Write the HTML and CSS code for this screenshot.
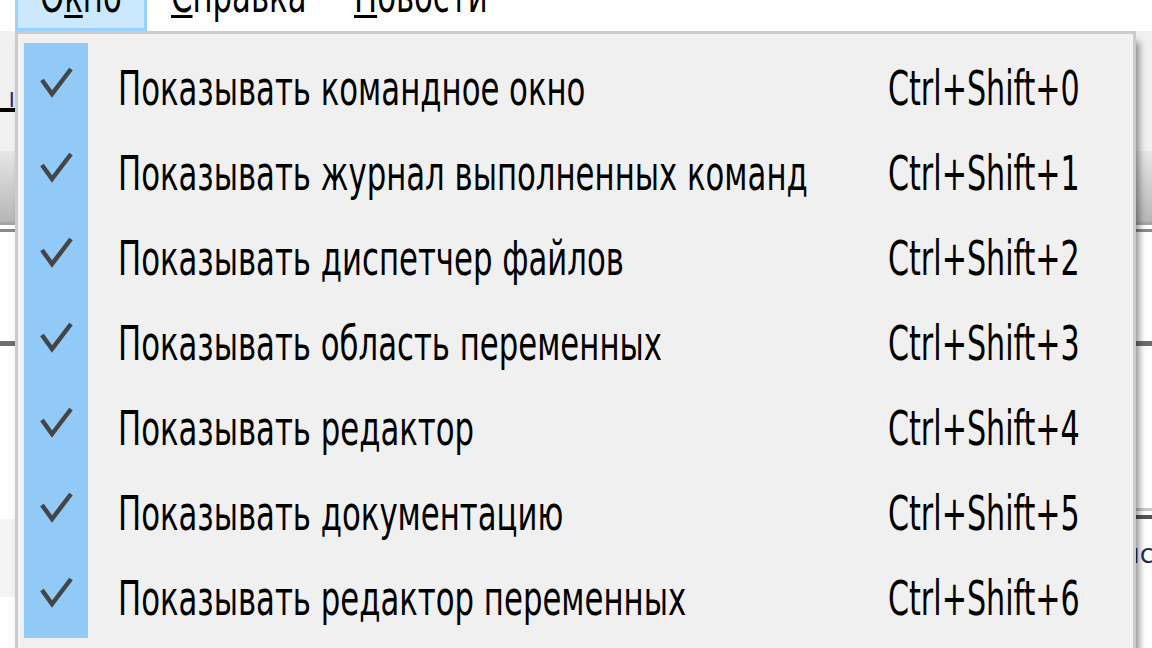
FILE: index.html
```html
<!DOCTYPE html>
<html lang="ru">
<head>
<meta charset="utf-8">
<title>Окно</title>
<link rel="stylesheet" href="styles.css">
</head>
<body>
<div class="app">
  <div class="menubar">
    <div class="mb-item mb-open"><span class="mb-text">О<u>к</u>но</span></div>
    <div class="mb-item mb-help"><span class="mb-text"><u>С</u>правка</span></div>
    <div class="mb-item"><span class="mb-text"><u>Н</u>овости</span></div>
  </div>
  <div class="toolbar"><span class="tb-frag"><u>ı</u></span></div>
  <div class="ribbon"></div>
  <div class="pane pane-a"></div>
  <div class="pane pane-b"></div>
  <div class="pane pane-c">
    <div class="pane-c-left"></div>
    <div class="pane-c-right"><span class="rc-text">ıc</span></div>
  </div>
</div>

<div class="menu">
  <div class="menu-row">
    <div class="check"><svg viewBox="0 0 64 85" width="64" height="85"><polyline points="18,37 28,51 47,26"/></svg></div>
    <div class="label"><span class="txt">Показывать командное окно</span></div>
    <div class="shortcut"><span class="txt">Ctrl+Shift+0</span></div>
  </div>
  <div class="menu-row">
    <div class="check"><svg viewBox="0 0 64 85" width="64" height="85"><polyline points="18,37 28,51 47,26"/></svg></div>
    <div class="label"><span class="txt">Показывать журнал выполненных команд</span></div>
    <div class="shortcut"><span class="txt">Ctrl+Shift+1</span></div>
  </div>
  <div class="menu-row">
    <div class="check"><svg viewBox="0 0 64 85" width="64" height="85"><polyline points="18,37 28,51 47,26"/></svg></div>
    <div class="label"><span class="txt">Показывать диспетчер файлов</span></div>
    <div class="shortcut"><span class="txt">Ctrl+Shift+2</span></div>
  </div>
  <div class="menu-row">
    <div class="check"><svg viewBox="0 0 64 85" width="64" height="85"><polyline points="18,37 28,51 47,26"/></svg></div>
    <div class="label"><span class="txt">Показывать область переменных</span></div>
    <div class="shortcut"><span class="txt">Ctrl+Shift+3</span></div>
  </div>
  <div class="menu-row">
    <div class="check"><svg viewBox="0 0 64 85" width="64" height="85"><polyline points="18,37 28,51 47,26"/></svg></div>
    <div class="label"><span class="txt">Показывать редактор</span></div>
    <div class="shortcut"><span class="txt">Ctrl+Shift+4</span></div>
  </div>
  <div class="menu-row">
    <div class="check"><svg viewBox="0 0 64 85" width="64" height="85"><polyline points="18,37 28,51 47,26"/></svg></div>
    <div class="label"><span class="txt">Показывать документацию</span></div>
    <div class="shortcut"><span class="txt">Ctrl+Shift+5</span></div>
  </div>
  <div class="menu-row">
    <div class="check"><svg viewBox="0 0 64 85" width="64" height="85"><polyline points="18,37 28,51 47,26"/></svg></div>
    <div class="label"><span class="txt">Показывать редактор переменных</span></div>
    <div class="shortcut"><span class="txt">Ctrl+Shift+6</span></div>
  </div>
</div>
</body>
</html>
```
FILE: styles.css
```css
html, body {
  margin: 0;
  padding: 0;
}
body {
  width: 1152px;
  height: 648px;
  overflow: hidden;
  position: relative;
  background: #ffffff;
  font-family: "DejaVu Sans Condensed", "DejaVu Sans", sans-serif;
  font-size: 48px;
  color: #000000;
}

/* ---------- background application window ---------- */
.app {
  display: flex;
  flex-direction: column;
  width: 1152px;
  height: 648px;
}
.menubar {
  display: flex;
  height: 31px;
  padding-left: 15px;
  background: #ffffff;
  flex: none;
}
.mb-item {
  box-sizing: border-box;
  height: 31px;
  padding-left: 24px;
  width: 183px;
}
.mb-open {
  width: 132px;
  padding-left: 22px;
  background: #cce8ff;
  border: 3px solid #99d1ff;
  border-top: 0;
}
.mb-text {
  display: block;
  width: max-content;
  line-height: 48px;
  margin-top: -29px;
  white-space: nowrap;
  transform: scaleX(0.712);
  transform-origin: left center;
}
u {
  text-decoration-thickness: 3px;
  text-underline-offset: 3px;
}

.toolbar {
  height: 120px;
  background: #f0f0f0;
  flex: none;
  overflow: hidden;
}
.tb-frag {
  display: block;
  margin-left: -6px;
  margin-top: 57px;
  width: 21px;
  overflow: hidden;
}
.tb-frag u {
  display: block;
  width: 21px;
  text-decoration: none;
  border-bottom: 4px solid #000;
  line-height: 20px;
  font-size: 26px;
  text-align: right;
  color: #2b2b80;
}

.ribbon {
  height: 71px;
  flex: none;
  background: linear-gradient(#e6e6e6, #b6b6b6);
  border-bottom: 3px solid #a6a6a6;
}
.pane {
  flex: none;
  background: #ffffff;
}
.pane-a {
  height: 4px;
  border-bottom: 3px solid #8a8a8a;
}
.pane-b {
  height: 109px;
  border-bottom: 5px solid #6e6e6e;
}
.pane-c {
  flex: 1;
  display: flex;
}
.pane-c-left {
  width: 15px;
  margin-top: 173px;
  height: 78px;
  background: #f4f4f4;
}
.pane-c-right {
  flex: 1;
  margin-top: 162px;
  height: 100px;
  border-top: 3px solid #c8c8c8;
  position: relative;
  display: flex;
  justify-content: flex-end;
}
.pane-c-right::before {
  content: "";
  display: block;
  position: absolute;
  left: 0;
  right: 0;
  top: 4px;
  height: 4px;
  background: #555555;
}
.rc-text {
  font-family: "DejaVu Sans", sans-serif;
  font-size: 26px;
  line-height: 30px;
  margin-top: 28px;
  margin-right: -2px;
  color: #1e2e60;
}

/* ---------- popup menu (overlays the window) ---------- */
.menu {
  position: absolute;
  left: 15px;
  top: 31px;
  width: 1121px;
  height: 617px;
  box-sizing: border-box;
  background: #f0f0f0;
  border: 3px solid #cccccc;
  border-bottom: 0;
  padding: 9px 0 0 6px;
  box-shadow: inset 3px 3px 0 0 #f3f3f3, inset -3px 0 0 0 #f3f3f3, 4px 10px 7px -1px rgba(0, 0, 0, 0.45);
}
.menu-row {
  display: flex;
  height: 85px;
}
.check {
  width: 64px;
  height: 85px;
  flex: none;
  background: #91c9f7;
}
.check svg {
  display: block;
}
.check polyline {
  fill: none;
  stroke: #454545;
  stroke-width: 4.5;
  stroke-linejoin: miter;
}
.label {
  width: 770px;
  margin-left: 30px;
  flex: none;
  line-height: 79px;
  padding-top: 6px;
  white-space: nowrap;
}
.shortcut {
  flex: none;
  line-height: 79px;
  padding-top: 6px;
  white-space: nowrap;
}
.txt {
  display: inline-block;
  transform: scaleX(0.712);
  transform-origin: left center;
}
.shortcut .txt {
  transform: scaleX(0.698);
}
```
